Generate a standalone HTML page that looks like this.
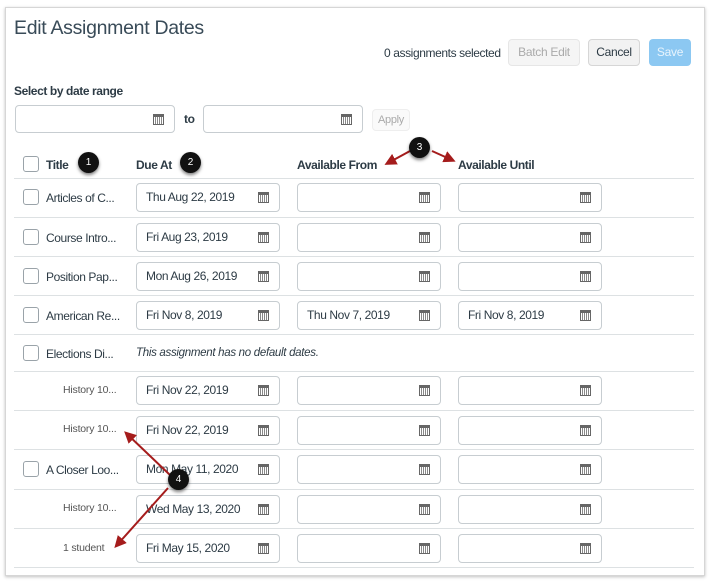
<!DOCTYPE html><html><head><style>
body{margin:0;width:713px;height:582px;background:#fff;font-family:"Liberation Sans",sans-serif;position:relative;overflow:hidden;color:#2d3b45}
.a{position:absolute}
.panel{left:5px;top:7px;width:698px;height:567px;border:1px solid #d6d6d6;box-shadow:0 1px 3px rgba(0,0,0,.25)}
.inp{position:absolute;height:29px;border:1px solid #c7cdd1;border-radius:4px;background:#fff;box-sizing:border-box;font-size:12px;letter-spacing:-0.4px;line-height:27px;padding-left:9px;color:#2d3b45}
.cal{position:absolute;right:10px;top:8px;width:11px;height:11px;border:1px solid #666;border-top:3px solid #666;box-sizing:border-box;background:repeating-linear-gradient(90deg,#fff 0 1px,#888 1px 2px)}
.cb{position:absolute;width:14px;height:14px;border:1px solid #9aa3a9;border-radius:3px;background:#fff}
.line{position:absolute;left:14px;width:680px;height:1px;background:#dde1e3}
.t{position:absolute;font-size:12px;letter-spacing:-0.4px;white-space:nowrap}
.s{position:absolute;font-size:10.5px;letter-spacing:-0.2px;color:#555;white-space:nowrap}
.btn{position:absolute;border-radius:4px;font-size:12px;letter-spacing:-0.3px;text-align:center;box-sizing:border-box}
.h{font-weight:bold;font-size:12px;letter-spacing:-0.4px}
.badge{position:absolute;width:21px;height:21px;border-radius:50%;background:#111;color:#fff;font-size:10px;text-align:center;line-height:21px;box-shadow:0 2px 3px rgba(0,0,0,.5)}
</style></head><body>
<div class="a panel"></div>
<div class="t" style="left:14px;top:17px;font-size:19.5px;letter-spacing:-0.3px;color:#394b58">Edit Assignment Dates</div>
<div class="t" style="left:384px;top:46px;font-size:12px;letter-spacing:-0.4px">0 assignments selected</div>
<div class="btn" style="left:508px;top:39px;width:72px;height:27px;background:#f5f5f5;border:1px solid #e6e6e6;color:#aaa;line-height:25px">Batch Edit</div>
<div class="btn" style="left:588px;top:39px;width:52px;height:27px;background:#f2f2f2;border:1px solid #d6d6d6;line-height:25px">Cancel</div>
<div class="btn" style="left:649px;top:39px;width:42px;height:27px;background:#8cc8f2;color:#e8f4fd;line-height:27px">Save</div>
<div class="t h" style="left:14px;top:84px">Select by date range</div>
<div class="inp" style="left:15px;top:105px;width:160px;height:28px"><span class="cal"></span></div>
<div class="t h" style="left:184px;top:112px">to</div>
<div class="inp" style="left:203px;top:105px;width:160px;height:28px"><span class="cal"></span></div>
<div class="btn" style="left:372px;top:109px;width:38px;height:22px;border:1px solid #eee;background:#fafafa;color:#aaa;font-size:11px;line-height:20px">Apply</div>
<div class="cb" style="left:23px;top:156px"></div>
<div class="t h" style="left:46px;top:158px">Title</div>
<div class="t h" style="left:136px;top:158px">Due At</div>
<div class="t h" style="left:297px;top:158px">Available From</div>
<div class="t h" style="left:458px;top:158px">Available Until</div>
<div class="line" style="top:178px"></div>

<div class="line" style="top:217px"></div><div class="line" style="top:256px"></div><div class="line" style="top:295px"></div><div class="line" style="top:334px"></div><div class="line" style="top:371px"></div><div class="line" style="top:410px"></div><div class="line" style="top:449px"></div><div class="line" style="top:489px"></div><div class="line" style="top:528px"></div><div class="line" style="top:567px"></div>

<div class="cb" style="left:23px;top:189px"></div><div class="t" style="left:46px;top:191px">Articles of C...</div>
<div class="inp" style="left:136px;top:183px;width:144px">Thu Aug 22, 2019<span class="cal"></span></div>
<div class="inp" style="left:297px;top:183px;width:144px"><span class="cal"></span></div>
<div class="inp" style="left:458px;top:183px;width:144px"><span class="cal"></span></div>

<div class="cb" style="left:23px;top:229px"></div><div class="t" style="left:46px;top:231px">Course Intro...</div>
<div class="inp" style="left:136px;top:223px;width:144px">Fri Aug 23, 2019<span class="cal"></span></div>
<div class="inp" style="left:297px;top:223px;width:144px"><span class="cal"></span></div>
<div class="inp" style="left:458px;top:223px;width:144px"><span class="cal"></span></div>

<div class="cb" style="left:23px;top:268px"></div><div class="t" style="left:46px;top:270px">Position Pap...</div>
<div class="inp" style="left:136px;top:262px;width:144px">Mon Aug 26, 2019<span class="cal"></span></div>
<div class="inp" style="left:297px;top:262px;width:144px"><span class="cal"></span></div>
<div class="inp" style="left:458px;top:262px;width:144px"><span class="cal"></span></div>

<div class="cb" style="left:23px;top:307px"></div><div class="t" style="left:46px;top:309px">American Re...</div>
<div class="inp" style="left:136px;top:301px;width:144px">Fri Nov 8, 2019<span class="cal"></span></div>
<div class="inp" style="left:297px;top:301px;width:144px">Thu Nov 7, 2019<span class="cal"></span></div>
<div class="inp" style="left:458px;top:301px;width:144px">Fri Nov 8, 2019<span class="cal"></span></div>

<div class="cb" style="left:23px;top:345px"></div><div class="t" style="left:46px;top:347px">Elections Di...</div>
<div class="t" style="left:136px;top:347px;font-style:italic;font-size:11.5px;letter-spacing:-0.3px">This assignment has no default dates.</div>

<div class="s" style="left:63px;top:384px">History 10...</div>
<div class="inp" style="left:136px;top:376px;width:144px">Fri Nov 22, 2019<span class="cal"></span></div>
<div class="inp" style="left:297px;top:376px;width:144px"><span class="cal"></span></div>
<div class="inp" style="left:458px;top:376px;width:144px"><span class="cal"></span></div>

<div class="s" style="left:63px;top:423px">History 10...</div>
<div class="inp" style="left:136px;top:416px;width:144px">Fri Nov 22, 2019<span class="cal"></span></div>
<div class="inp" style="left:297px;top:416px;width:144px"><span class="cal"></span></div>
<div class="inp" style="left:458px;top:416px;width:144px"><span class="cal"></span></div>

<div class="cb" style="left:23px;top:461px"></div><div class="t" style="left:46px;top:463px">A Closer Loo...</div>
<div class="inp" style="left:136px;top:455px;width:144px">Mon May 11, 2020<span class="cal"></span></div>
<div class="inp" style="left:297px;top:455px;width:144px"><span class="cal"></span></div>
<div class="inp" style="left:458px;top:455px;width:144px"><span class="cal"></span></div>

<div class="s" style="left:63px;top:502px">History 10...</div>
<div class="inp" style="left:136px;top:495px;width:144px">Wed May 13, 2020<span class="cal"></span></div>
<div class="inp" style="left:297px;top:495px;width:144px"><span class="cal"></span></div>
<div class="inp" style="left:458px;top:495px;width:144px"><span class="cal"></span></div>

<div class="s" style="left:63px;top:542px">1 student</div>
<div class="inp" style="left:136px;top:534px;width:144px">Fri May 15, 2020<span class="cal"></span></div>
<div class="inp" style="left:297px;top:534px;width:144px"><span class="cal"></span></div>
<div class="inp" style="left:458px;top:534px;width:144px"><span class="cal"></span></div>

<svg class="a" style="left:0;top:0" width="713" height="582">
<defs><marker id="m" markerWidth="6" markerHeight="6" refX="4" refY="3" orient="auto"><path d="M0,0 L6,3 L0,6 z" fill="#a51c1c"/></marker></defs>
<g stroke="#a51c1c" stroke-width="2" fill="none">
<line x1="410" y1="151" x2="388" y2="163" marker-end="url(#m)"/>
<line x1="432" y1="151" x2="452" y2="160" marker-end="url(#m)"/>
<line x1="170" y1="475" x2="127" y2="434" marker-end="url(#m)"/>
<line x1="168" y1="488" x2="117" y2="545" marker-end="url(#m)"/>
</g></svg>
<div class="badge" style="left:78px;top:152px">1</div>
<div class="badge" style="left:180px;top:152px">2</div>
<div class="badge" style="left:409px;top:137px">3</div>
<div class="badge" style="left:168px;top:469px">4</div>
</body></html>
